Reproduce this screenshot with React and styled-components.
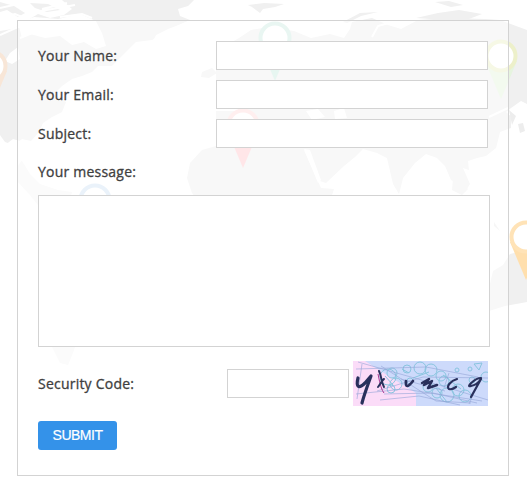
import React from "react";
import styled, { createGlobalStyle } from "styled-components";

const GlobalStyle = createGlobalStyle`
  *, *::before, *::after { box-sizing: border-box; }
  body { margin: 0; background: #fff; overflow: hidden; }
`;

const Page = styled.main`
  position: relative;
  width: 527px;
  height: 490px;
  padding: 20px 0 0 17px;
  overflow: hidden;
`;

const Backdrop = styled.svg`
  position: absolute;
  inset: 0;
  z-index: -1;
`;

const Panel = styled.form`
  display: flex;
  flex-direction: column;
  align-items: flex-start;
  width: 492px;
  height: 456px;
  padding: 20px;
  border: 1px solid #d3d3d3;
  background: rgba(255, 255, 255, 0.5);
`;

const Row = styled.div`
  display: flex;
  align-items: center;
  justify-content: space-between;
  width: 450px;
  height: ${(p) => p.$height || 29}px;
  margin-bottom: ${(p) => p.$gap ?? 10}px;
`;

const Label = styled.label`
  font: 400 14px/20px "Open Sans", sans-serif;
  letter-spacing: 0.22px;
  -webkit-text-stroke: 0.3px #404040;
  color: #404040;
  white-space: nowrap;
`;

const Input = styled.input`
  width: ${(p) => p.$width || 272}px;
  height: 29px;
  padding: 0 8px;
  border: 1px solid #d3d3d3;
  border-radius: 0;
  background: #fff;
  outline: none;
`;

const Message = styled.textarea`
  display: block;
  width: 452px;
  height: 152px;
  margin-bottom: 14px;
  padding: 8px;
  border: 1px solid #d3d3d3;
  background: #fff;
  resize: none;
  outline: none;
`;

const CodeGroup = styled.div`
  display: flex;
  align-items: center;
  gap: 4px;
`;

const Captcha = styled.svg`
  display: block;
  width: 135px;
  height: 45px;
`;

const Submit = styled.button`
  width: 79px;
  height: 29px;
  padding: 0;
  border: 0;
  border-radius: 3px;
  background: #3492e9;
  color: #fff;
  font: 14px/29px "Liberation Sans", Arial, sans-serif;
  letter-spacing: -0.5px;
  -webkit-text-stroke: 0.2px #fff;
`;

function Pin({ x, y, ring, tip }) {
  return (
    <g transform={`translate(${x} ${y})`}>
      <path d="M-16 5 L0 43 L16 5Z" fill={tip} />
      <circle r="14.5" fill="#fff" stroke={ring} strokeWidth="4" />
    </g>
  );
}

function WorldMap() {
  return (
    <Backdrop width="527" height="490" viewBox="0 0 527 490" aria-hidden="true">
      <g fill="#f0f0f0">
        <path d="M62 0H194L188 6 178 9 180 16 190 20 176 26 168 29 156 35 152 43 140 43 132 50 124 58 116 66 98 66 92 72 82 76 72 79 62 86 54 94 66 102 62 112 52 117 43 123 39 132 31 141 22 139 14 145 5 142 0 135V28L12 25 28 20 38 14 50 18 64 15 72 9Z" />
        <path d="M0 2 L14 6 25 13 18 17 7 10 0 12ZM30 3 L48 4 60 10 47 12 35 8Z" />
        <path d="M248 5 L264 3 284 4 275 7 263 9 260 13 252 7Z" />
        <path d="M202 72 L212 68 217 73 209 78 201 77Z" />
        <path d="M216 58 L224 48 232 42 239 38 251 30 268 27 294 31 311 38 330 34 344 38 350 29 352 22 372 18 388 25 401 29 418 20 450 18 485 19 500 20 527 30V104L516 106 511 112 511 128 500 132 496 148 486 156 477 158 468 161 469 170 463 168 470 184 465 192 459 184 451 180 445 166 437 158 426 154 415 163 403 178 399 194 393 184 387 158 377 153 363 149 355 157 344 166 326 183 320 181 315 166 306 151 299 148 285 150 260 147 242 150 216 146V111H238V100H216Z" />
        <path d="M216 146 L303 148 321 188 334 189 326 214 305 247 290 290 270 308 255 290 246 245 226 219 204 208 192 193 187 178 190 163 202 150Z" />
        <path d="M343 22 L360 13 378 12 361 16 347 23ZM416 18 L438 13 459 10 482 14 469 19 444 20Z" />
        <path d="M435 2 L449 1 463 5 451 7Z M453 178 L468 189 462 195 452 190Z" />
        <path d="M527 250 L510 254 503 265 493 271 488 292 489 311 505 306 527 302Z" />
      </g>
      <g fill="#f6f6f6">
        <path d="M19 156 L30 174 40 184 58 190 72 192 70 200 84 208 112 218 130 242 112 282 90 302 74 350 68 365 60 363 52 347 54 318 48 280 40 250 42 210 29 194 17 181Z" />
      </g>
      <g fill="#fff">
        <path d="M10 53 L18 47 20 59 12 64 5 61ZM5 145 L13 139 20 141 24 158 15 169 3 165 1 155ZM306 111 L318 109 325 117 312 120ZM334 111 L344 108 347 118 335 119ZM304 149 L310 150 321 180 318 183Z" />
        <path d="M511 108 L521 101 527 104V122L515 120 506 112Z" />
        <path d="M18 23 L34 17 58 19 80 14 96 21 102 33 106 46 96 49 84 42 72 45 60 36 45 38 30 34 22 38Z" />
        <path d="M128 50 L136 42 152 40 164 33 182 30 190 44 158 54 134 68 106 76 112 66Z" />
        <path d="M0 25 L15 20 26 22 12 29 0 31Z" />
      </g>
      <g fill="none" stroke="#fff" strokeWidth="2">
        <path d="M0 17 L15 14 27 19M0 35 L18 27 40 25M35 12 L75 5M60 17 L82 14 92 18M20 38 L35 32M0 8 L18 4 32 7M42 9 L67 3M372 37 L378 26 392 22M355 105 L418 107M489 117 L508 108" />
      </g>
      <g fill="#ededed">
        <path d="M509 110 L516 116 512 125ZM518 124 L523 123 525 131 520 133ZM494 222 L500 231 494 226Z" />
      </g>
      <Pin x={275} y={38} ring="#d2ede5" tip="#cfece3" />
      <Pin x={501} y={56} ring="#edf0ca" tip="#e6f4df" />
      <Pin x={243} y={125} ring="#ffdfdf" tip="#ffccd1" />
      <Pin x={95} y={200} ring="#d4e5f4" tip="#d4e5f4" />
      <Pin x={526} y={237} ring="#ffe3b7" tip="#ffdfad" />
      <Pin x={-9} y={66} ring="#f8e6d7" tip="#f8e6d7" />
    </Backdrop>
  );
}

const bubbles = [
  [35, 16, 8], [39, 12, 5], [43, 23, 6], [54, 8, 4], [67, 7, 6],
  [78, 9, 6], [88, 15, 5], [94, 34, 7], [84, 32, 5], [105, 29, 6],
  [112, 35, 6], [104, 9, 2], [117, 8, 2], [91, 20, 5], [38, 28, 4],
  [119, 19, 3], [57, 20, 3], [75, 26, 5], [133, 16, 5],
];

function CaptchaImage() {
  return (
    <Captcha viewBox="0 0 135 45" role="img" aria-label="Security code">
      <rect width="135" height="45" fill="#cddafb" />
      <path d="M0 0 H12 L34 14 63 32V45H0Z" fill="#fbdcf8" />
      <g fill="none" stroke="#89c5df" strokeWidth="1">
        {bubbles.map(([x, y, r]) => (
          <circle key={`${x}-${y}`} cx={x} cy={y} r={r} />
        ))}
        <path d="M121 3 L129 2 126 9Z M49 8 L56 12 M32 15 L40 24 M83 27 L94 41 M60 17 L76 11 M90 14 L108 28" />
      </g>
      <g fill="none" stroke="#93a5d6" strokeWidth=".6">
        <path d="M5 1 L86 24 135 39M3 8 L73 6 125 16M9 3 L4 38M28 5 L83 40 118 42M3 33 L51 28 129 40M31 33 L80 32 124 42M27 39 L66 35 107 44M24 30 L70 16 135 17M96 12 L91 27M48 18 L92 30M127 19 L116 43" />
      </g>
      <path d="M25 13 Q28 29 31 32" fill="none" stroke="#a53791" />
      <g fill="none" stroke="#29305c" strokeLinecap="round" strokeLinejoin="round">
        <path d="M5 17 C3 25 5 29 12 22 L18 15 C14 26 11 34 9 42" strokeWidth="3.2" />
        <path d="M26 10 C29 16 28 21 31 26M31 18 C29 19 28 22 25 26" strokeWidth="2" />
        <path d="M53 20 Q52 30 60 20" strokeWidth="2.7" />
        <path d="M69 22 L76 18 71 24 79 20 75 27 84 24" strokeWidth="2.5" />
        <path d="M104 18 C97 20 93 26 96 28 Q99 29 103 26" strokeWidth="2.2" />
        <path d="M128 17 C122 17 112 27 118 25 Q124 24 128 18 L118 36" strokeWidth="2.2" />
      </g>
    </Captcha>
  );
}

export default function App() {
  return (
    <Page>
      <GlobalStyle />
      <WorldMap />
      <Panel onSubmit={(event) => event.preventDefault()}>
        <Row>
          <Label htmlFor="name">Your Name:</Label>
          <Input id="name" />
        </Row>
        <Row>
          <Label htmlFor="email">Your Email:</Label>
          <Input id="email" type="email" />
        </Row>
        <Row>
          <Label htmlFor="subject">Subject:</Label>
          <Input id="subject" />
        </Row>
        <Row $height={27} $gap={10}>
          <Label htmlFor="message">Your message:</Label>
        </Row>
        <Message id="message" />
        <Row $height={45} $gap={15}>
          <Label htmlFor="code">Security Code:</Label>
          <CodeGroup>
            <Input id="code" $width={122} />
            <CaptchaImage />
          </CodeGroup>
        </Row>
        <Submit type="submit">SUBMIT</Submit>
      </Panel>
    </Page>
  );
}
